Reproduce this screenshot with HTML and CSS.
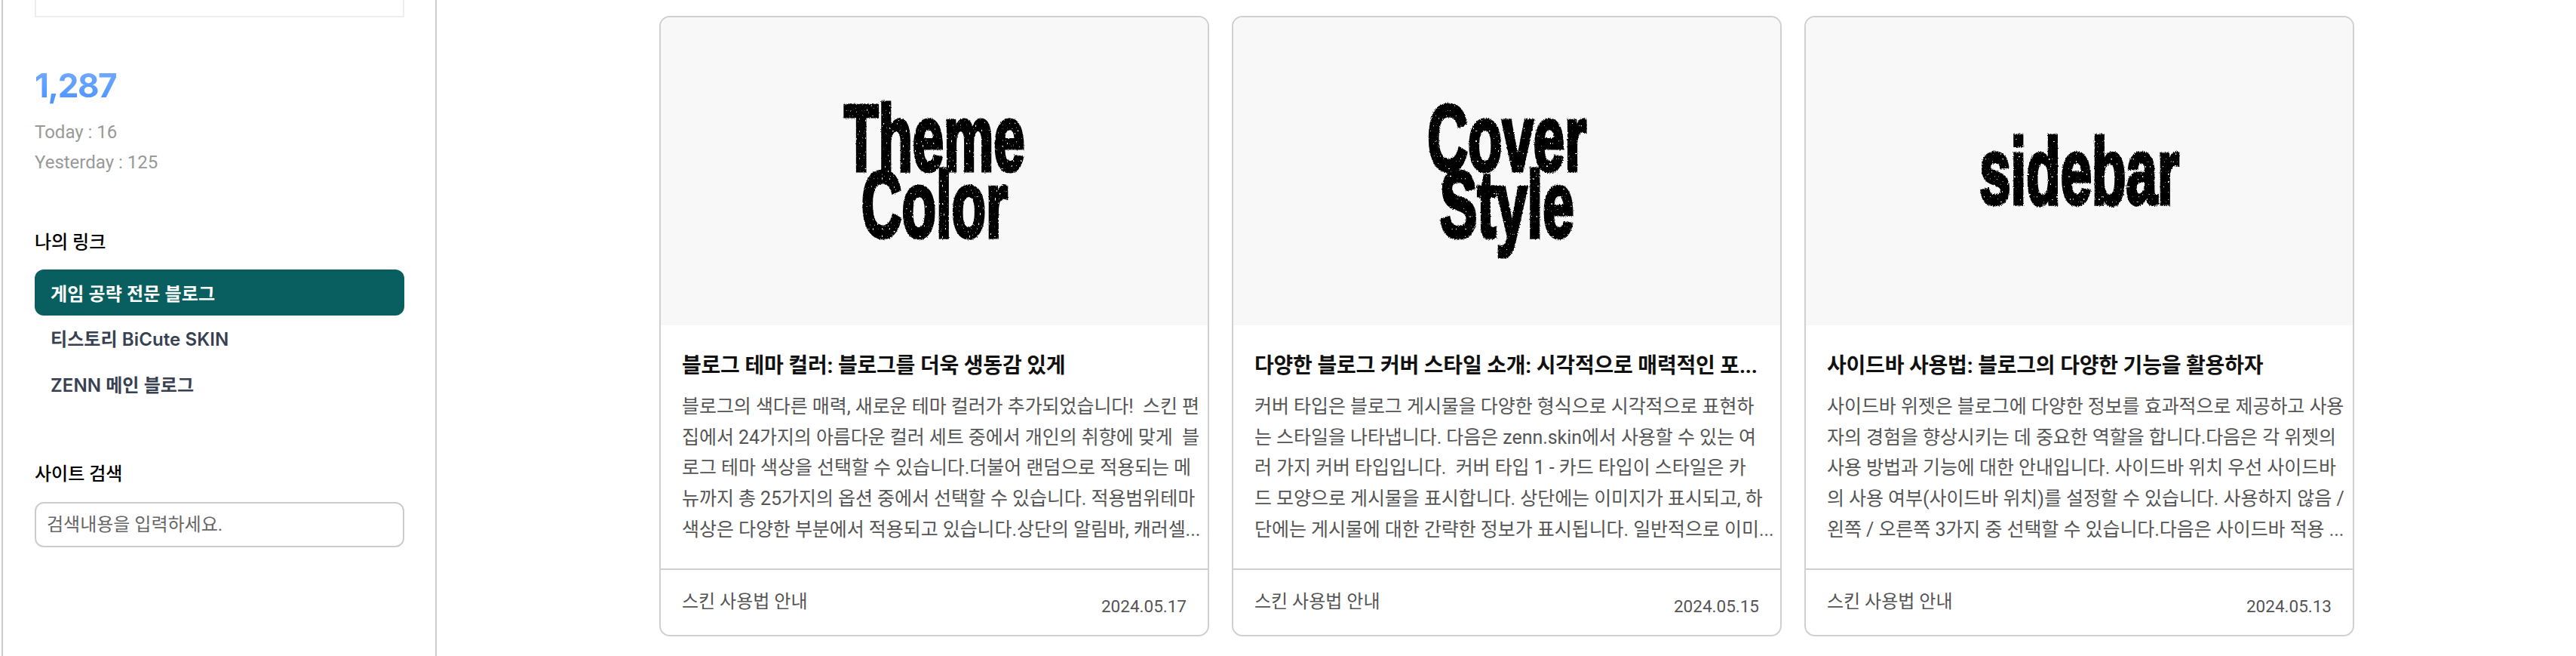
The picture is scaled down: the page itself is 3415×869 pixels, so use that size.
FILE: index.html
```html
<!DOCTYPE html>
<html lang="ko">
  <head>
    <meta charset="UTF-8" />
    <meta name="viewport" content="width=device-width, initial-scale=1.0" />
    <title>ZENN 블로그</title>
    <link rel="stylesheet" href="styles.css">
  </head>
  <body>
    <!-- roughens the edges of the cover lettering and punches small specks in it -->
    <svg class="filters" width="0" height="0" aria-hidden="true">
      <filter id="rough" x="-5%" y="-5%" width="110%" height="110%">
        <feTurbulence type="fractalNoise" baseFrequency="0.6" numOctaves="2" seed="4" result="noise" />
        <feDisplacementMap in="SourceGraphic" in2="noise" scale="4" result="shaken" />
        <feTurbulence type="fractalNoise" baseFrequency="0.3" numOctaves="1" seed="11" />
        <feColorMatrix type="matrix" values="0 0 0 0 0  0 0 0 0 0  0 0 0 0 0  0 0 0 14 -9.6" result="specks" />
        <feComposite in="shaken" in2="specks" operator="out" />
      </filter>
    </svg>

    <div class="page">
      <aside class="sidebar">
        <div class="widget-box"></div>

        <section class="counter">
          <div class="counter-total">1,287</div>
          <div class="counter-line">Today : 16</div>
          <div class="counter-line">Yesterday : 125</div>
        </section>

        <section class="links">
          <h2 class="widget-title">나의 링크</h2>
          <a class="link link-active" href="#">게임 공략 전문 블로그</a>
          <a class="link" href="#">티스토리 BiCute SKIN</a>
          <a class="link" href="#">ZENN 메인 블로그</a>
        </section>

        <section class="search">
          <h2 class="widget-title">사이트 검색</h2>
          <input class="search-input" type="text" placeholder="검색내용을 입력하세요." />
        </section>
      </aside>

      <main class="content">
        <div class="card-grid">
          <article class="card">
            <div class="cover">
              <div class="cover-text"><span>Theme</span><span>Color</span></div>
            </div>
            <div class="card-body">
              <h3 class="card-title">블로그 테마 컬러: 블로그를 더욱 생동감 있게</h3>
              <p class="card-excerpt">블로그의 색다른 매력, 새로운 테마 컬러가 추가되었습니다!&nbsp; 스킨 편<br>집에서 24가지의 아름다운 컬러 세트 중에서 개인의 취향에 맞게&nbsp; 블<br>로그 테마 색상을 선택할 수 있습니다.더불어 랜덤으로 적용되는 메<br>뉴까지 총 25가지의 옵션 중에서 선택할 수 있습니다. 적용범위테마<br>색상은 다양한 부분에서 적용되고 있습니다.상단의 알림바, 캐러셀...</p>
            </div>
            <div class="card-foot">
              <span class="card-category">스킨 사용법 안내</span>
              <span class="card-date">2024.05.17</span>
            </div>
          </article>

          <article class="card">
            <div class="cover">
              <div class="cover-text"><span>Cover</span><span>Style</span></div>
            </div>
            <div class="card-body">
              <h3 class="card-title">다양한 블로그 커버 스타일 소개: 시각적으로 매력적인 포...</h3>
              <p class="card-excerpt">커버 타입은 블로그 게시물을 다양한 형식으로 시각적으로 표현하<br>는 스타일을 나타냅니다. 다음은 zenn.skin에서 사용할 수 있는 여<br>러 가지 커버 타입입니다.&nbsp; 커버 타입 1 - 카드 타입이 스타일은 카<br>드 모양으로 게시물을 표시합니다. 상단에는 이미지가 표시되고, 하<br>단에는 게시물에 대한 간략한 정보가 표시됩니다. 일반적으로 이미...</p>
            </div>
            <div class="card-foot">
              <span class="card-category">스킨 사용법 안내</span>
              <span class="card-date">2024.05.15</span>
            </div>
          </article>

          <article class="card">
            <div class="cover">
              <div class="cover-text"><span>sidebar</span></div>
            </div>
            <div class="card-body">
              <h3 class="card-title">사이드바 사용법: 블로그의 다양한 기능을 활용하자</h3>
              <p class="card-excerpt">사이드바 위젯은 블로그에 다양한 정보를 효과적으로 제공하고 사용<br>자의 경험을 향상시키는 데 중요한 역할을 합니다.다음은 각 위젯의<br>사용 방법과 기능에 대한 안내입니다. 사이드바 위치 우선 사이드바<br>의 사용 여부(사이드바 위치)를 설정할 수 있습니다. 사용하지 않음 /<br>왼쪽 / 오른쪽 3가지 중 선택할 수 있습니다.다음은 사이드바 적용 ...</p>
            </div>
            <div class="card-foot">
              <span class="card-category">스킨 사용법 안내</span>
              <span class="card-date">2024.05.13</span>
            </div>
          </article>
        </div>
      </main>
    </div>
  </body>
</html>
```

FILE: styles.css
```css
* {
  box-sizing: border-box;
}

html,
body {
  height: 100%;
  margin: 0;
  overflow: hidden;
  background-color: white;
  font-family: Roboto, "Noto Sans CJK KR", sans-serif;
}

a {
  text-decoration: none;
}

.filters {
  display: block;
  height: 0;
}

.page {
  display: flex;
  height: 869px;
  padding-left: 2px;
}

/* sidebar */

.sidebar {
  flex: none;
  width: 577px;
  height: 100%;
  padding: 0 41px 0 42px;
  border-left: 2px solid #ccc;
  border-right: 2px solid #ccc;
}

.widget-box {
  height: 23px;
  border: 2px solid #eee;
  border-top: none;
}

.counter {
  margin-top: 64px;
}

.counter-total {
  width: fit-content;
  margin-bottom: 16px;
  font-family: Inter, sans-serif;
  font-size: 44px;
  line-height: 52px;
  font-weight: 700;
  letter-spacing: -1.5px;
  color: transparent;
  background-image: linear-gradient(#76adff, #4a92ff);
  background-clip: text;
  -webkit-background-clip: text;
}

.counter-line {
  font-size: 24px;
  line-height: 40px;
  color: #999;
}

.links {
  margin-top: 68px;
}

.widget-title {
  margin: 0 0 18px;
  font-size: 24px;
  line-height: 36px;
  font-weight: 500;
  color: black;
}

.link {
  display: flex;
  align-items: center;
  height: 60.5px;
  padding: 0 21px;
  font-family: Inter, "Noto Sans CJK KR", sans-serif;
  font-size: 24px;
  font-weight: 600;
  letter-spacing: 0.1px;
  color: #374151;
}

.link-active {
  color: white;
  background-color: #095f5f;
  border-radius: 12px;
}

.search {
  margin-top: 71px;
}

.search-input {
  display: block;
  width: 100%;
  height: 60px;
  margin-top: 19px;
  padding: 0 14px;
  font-family: inherit;
  font-size: 24px;
  background-color: white;
  border: 2px solid #ccc;
  border-radius: 12px;
}

.search .widget-title {
  margin-bottom: 0;
}

.search-input::placeholder {
  color: #666;
  opacity: 1;
}

/* cards */

.content {
  flex: 1;
  padding: 21px 0 0 295px;
}

.card-grid {
  display: grid;
  grid-template-columns: repeat(3, 729px);
  gap: 30px;
}

.card {
  height: 822px;
  display: flex;
  flex-direction: column;
  overflow: hidden;
  border: 2px solid #d0d0d0;
  border-radius: 14px;
}

.cover {
  flex: none;
  display: flex;
  align-items: center;
  justify-content: center;
  height: 408px;
  background-color: #f8f8f8;
}

.cover-text {
  display: flex;
  flex-direction: column;
  align-items: center;
  font-family: "Liberation Sans", sans-serif;
  font-size: 124px;
  line-height: 88px;
  font-weight: 700;
  color: black;
  -webkit-text-stroke: 5px black;
  transform: scaleX(0.6);
  filter: url(#rough);
}

.card-body {
  flex: 1;
  padding: 34px 28px 0;
}

.card-title {
  margin: 0 0 14px;
  font-size: 28px;
  line-height: 40px;
  font-weight: 700;
  letter-spacing: -0.2px;
  color: #111;
  white-space: nowrap;
}

.card-excerpt {
  margin: 0;
  font-size: 25px;
  line-height: 40.7px;
  letter-spacing: -0.06px;
  color: #555;
  white-space: nowrap;
}

.card-foot {
  flex: none;
  display: flex;
  justify-content: space-between;
  height: 88px;
  padding: 24px 28px 0;
  border-top: 2px solid #d0d0d0;
}

.card-category {
  font-size: 24px;
  line-height: 36px;
  color: #555;
}

.card-date {
  margin-top: 7px;
  font-size: 22.5px;
  line-height: 34px;
  color: #555;
}
```
